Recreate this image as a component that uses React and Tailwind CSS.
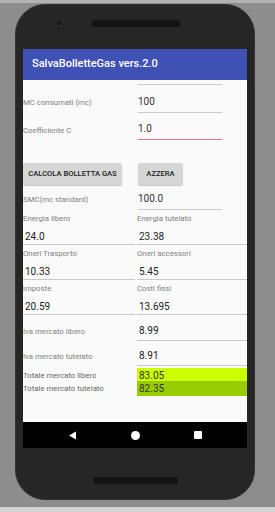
import React from 'react'

const font = { fontFamily: 'Roboto, "Noto Sans", sans-serif' }

function SingleRow({ label, value, h, line = 'border-[#c9c9c9]', labelPb = 'pb-[5px]' }) {
  return (
    <div className={`grid grid-cols-[114px_110px] ${h}`}>
      <div className={`flex items-end ${labelPb} text-[7.8px] leading-[10px] text-[#808080] whitespace-nowrap`}>
        {label}
      </div>
      <div className="flex flex-col justify-end">
        <div className={`ml-[1px] w-[84px] border-b ${line} pb-[4px] text-[10px] leading-[12px] text-[#333]`}>
          {value}
        </div>
      </div>
    </div>
  )
}

function PairRow({ a, b, h }) {
  return (
    <div className={`grid grid-cols-[114px_110px] ${h}`}>
      {[a, b].map((c, i) => (
        <div key={i} className="flex flex-col pt-[4px]">
          <div className="text-[7.8px] leading-[10px] text-[#808080] whitespace-nowrap">{c[0]}</div>
          <div
            className={`mt-[7px] pl-[2px] pb-[1px] border-b border-[#c9c9c9] text-[10px] leading-[12px] text-[#222] ${
              i === 0 ? 'mr-[2px]' : ''
            }`}
          >
            {c[1]}
          </div>
        </div>
      ))}
    </div>
  )
}

function WideRow({ label, value }) {
  return (
    <div className="grid grid-cols-[114px_110px] h-[25px]">
      <div className="flex items-end pb-[4px] text-[7.8px] leading-[10px] text-[#808080] whitespace-nowrap">
        {label}
      </div>
      <div className="flex flex-col justify-end">
        <div className="pl-[2px] pb-[3px] border-b border-[#c9c9c9] text-[10px] leading-[12px] text-[#222]">
          {value}
        </div>
      </div>
    </div>
  )
}

export default function App() {
  return (
    <div className="w-[275px] h-[512px] bg-[#8d8d8d] flex flex-col overflow-hidden" style={font}>
      <div className="h-[3px] bg-[#b3b3b3]" />

      {/* Phone */}
      <div className="pl-[15px] pt-[1px]">
        <div className="w-[240px] h-[496px] rounded-[30px] bg-[#262626] border border-[#333] px-[7px] flex flex-col">
          {/* top bezel */}
          <div className="h-[44px] pt-[14px]">
            <div className="flex items-center h-[8px]">
              <div className="ml-[34px] w-[4px] h-[4px] rounded-full bg-[#151515]" />
              <div className="ml-[30px] w-[90px] h-[7px] rounded-full bg-[#131313]" />
            </div>
          </div>

          {/* screen */}
          <div className="w-[224px] flex flex-col">
            <div className="h-[31px] bg-[#3f51b5] flex items-center pl-[9px] shadow-[0_1px_2px_rgba(0,0,0,0.3)]">
              <span className="text-white text-[11px] font-medium">SalvaBolletteGas vers.2.0</span>
            </div>

            <div className="h-[342px] bg-[#fafafa] flex flex-col">
              <div className="grid grid-cols-[114px_110px] h-[5px]">
                <div />
                <div className="ml-[1px] w-[84px] border-b border-[#c9c9c9]" />
              </div>
              <SingleRow label="MC consumati (mc)" value="100" h="h-[28px]" />
              <SingleRow
                label="Coefficiente C"
                value="1.0"
                h="h-[27px]"
                line="border-[#ec7096]"
                labelPb="pb-[4px]"
              />

              <div className="h-[45px] pt-[23px] flex">
                <div className="w-[99px] h-[22px] bg-[#d6d6d6] rounded-[2px] shadow-[0_1px_1px_rgba(0,0,0,0.2)] flex items-center justify-center text-[7.6px] font-medium text-[#222]">
                  CALCOLA BOLLETTA GAS
                </div>
                <div className="ml-[16px] w-[45px] h-[22px] bg-[#d6d6d6] rounded-[2px] shadow-[0_1px_1px_rgba(0,0,0,0.2)] flex items-center justify-center text-[7.6px] font-medium text-[#222]">
                  AZZERA
                </div>
              </div>

              <SingleRow label="SMC(mc standard)" value="100.0" h="h-[25px]" />
              <PairRow a={['Energia libero', '24.0']} b={['Energia tutelato', '23.38']} h="h-[35px]" />
              <PairRow a={['Oneri Trasporto', '10.33']} b={['Oneri accessori', '5.45']} h="h-[35px]" />
              <PairRow a={['imposte', '20.59']} b={['Costi fissi', '13.695']} h="h-[36px]" />
              <WideRow label="Iva mercato libero" value="8.99" />
              <WideRow label="Iva mercato tutelato" value="8.91" />

              <div className="mt-[2px] grid grid-cols-[114px_110px] h-[13px]">
                <div className="flex items-center text-[7.8px] text-[#666] whitespace-nowrap">Totale mercato libero</div>
                <div className="bg-[#ccff00] flex items-center pl-[2px] text-[10px] text-[#333]">83.05</div>
              </div>
              <div className="grid grid-cols-[114px_110px] h-[13px]">
                <div className="flex items-center text-[7.8px] text-[#666] whitespace-nowrap">Totale mercato tutelato</div>
                <div className="bg-[#99cc00] flex items-center pl-[2px] text-[10px] text-[#333]">82.35</div>
              </div>
            </div>

            {/* nav bar */}
            <div className="h-[26px] bg-black flex items-center">
              <svg className="ml-[45px]" width="9" height="9" viewBox="0 0 9 9">
                <path d="M1 4.5 L8 0.5 L8 8.5 Z" fill="#fff" />
              </svg>
              <div className="ml-[54px] w-[9px] h-[9px] rounded-full bg-white" />
              <div className="ml-[54px] w-[8px] h-[8px] rounded-[1px] bg-white" />
            </div>
          </div>

          {/* bottom bezel */}
          <div className="flex-1 pt-[29px]">
            <div className="ml-[70px] w-[85px] h-[7px] rounded-full bg-[#141414]" />
          </div>
        </div>
      </div>

      <div className="flex-1" />
      <div className="h-[5px] bg-[#d2d2d2]" />
    </div>
  )
}
